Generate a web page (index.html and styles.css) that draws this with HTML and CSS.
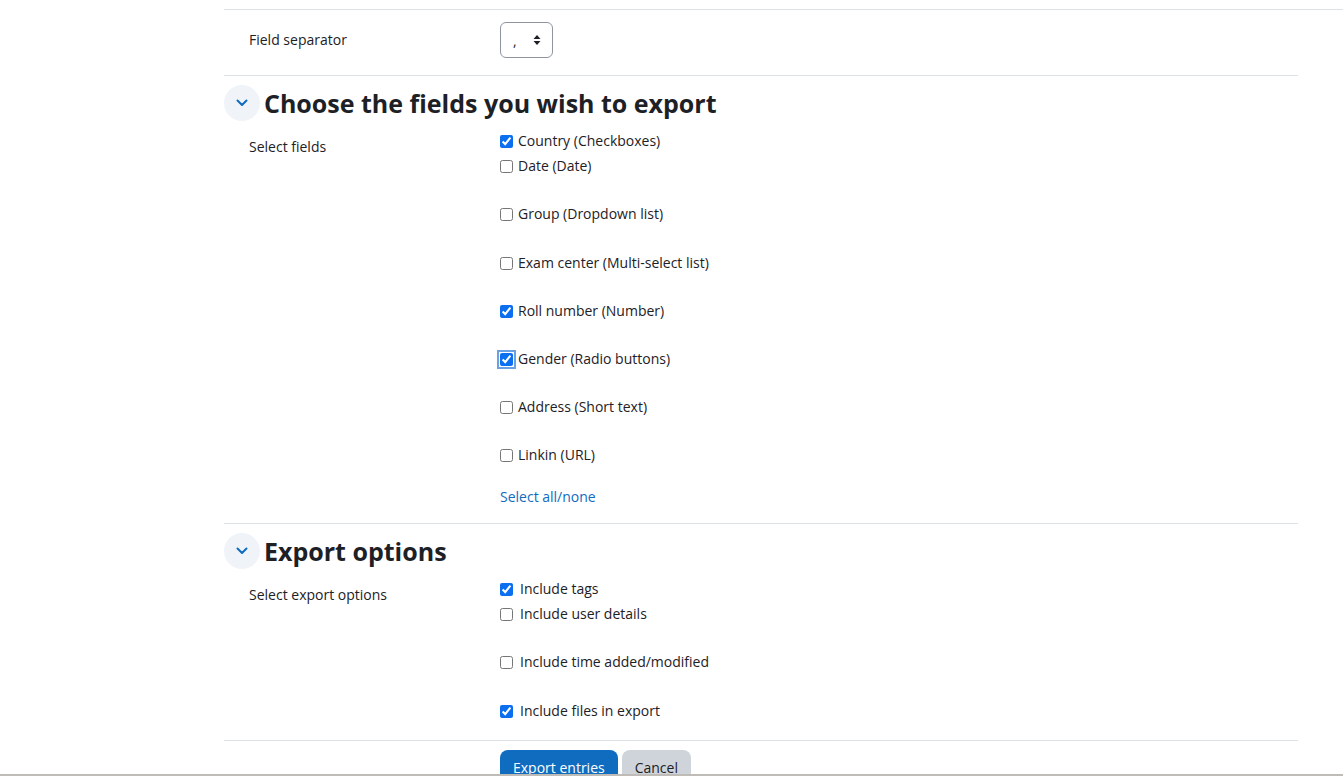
FILE: index.html
```html
<!DOCTYPE html>
<html>
<head>
<meta charset="utf-8">
<link rel="stylesheet" href="styles.css">
</head>
<body>
<div class="page">
  <div class="topline"></div>
  <div class="row sep-row">
    <div class="label">Field separator</div>
    <div class="content">
      <div class="select"><span class="sel-val">,</span>
        <svg class="sel-arrows" width="8" height="12" viewBox="0 0 8 12"><path d="M4 1 L7.5 5 H0.5 Z M4 11 L7.5 7 H0.5 Z" fill="#1d2125"/></svg>
      </div>
    </div>
  </div>

  <div class="section">
    <div class="sec-head">
      <span class="chev"><svg width="14" height="10" viewBox="0 0 14 10"><path d="M2.5 2.5 L7 7 L11.5 2.5" stroke="#0f6cbf" stroke-width="2" fill="none" stroke-linecap="round" stroke-linejoin="round"/></svg></span>
      <h3>Choose the fields you wish to export</h3>
    </div>
    <div class="row fields">
      <div class="label">Select fields</div>
      <div class="content">
        <label class="cb first"><input type="checkbox" checked> Country (Checkboxes)</label>
        <label class="cb"><input type="checkbox"> Date (Date)</label>
        <label class="cb gap"><input type="checkbox"> Group (Dropdown list)</label>
        <label class="cb gap plus"><input type="checkbox"> Exam center (Multi-select list)</label>
        <label class="cb gap"><input type="checkbox" checked> Roll number (Number)</label>
        <label class="cb gap"><input type="checkbox" class="focus" checked> Gender (Radio buttons)</label>
        <label class="cb gap"><input type="checkbox"> Address (Short text)</label>
        <label class="cb gap"><input type="checkbox"> Linkin (URL)</label>
        <a class="link" href="#">Select all/none</a>
      </div>
    </div>
  </div>

  <div class="section">
    <div class="sec-head">
      <span class="chev"><svg width="14" height="10" viewBox="0 0 14 10"><path d="M2.5 2.5 L7 7 L11.5 2.5" stroke="#0f6cbf" stroke-width="2" fill="none" stroke-linecap="round" stroke-linejoin="round"/></svg></span>
      <h3>Export options</h3>
    </div>
    <div class="row opts-row">
      <div class="label">Select export options</div>
      <div class="content opts">
        <label class="cb first"><input type="checkbox" checked> Include tags</label>
        <label class="cb"><input type="checkbox"> Include user details</label>
        <label class="cb gap"><input type="checkbox"> Include time added/modified</label>
        <label class="cb gap plus"><input type="checkbox" checked> Include files in export</label>
      </div>
    </div>
  </div>

  <div class="buttons">
    <button class="btn primary">Export entries</button>
    <button class="btn secondary">Cancel</button>
  </div>
</div>
<div class="bottombar"></div>
</body>
</html>
```
FILE: styles.css
```css
html, body {
  margin: 0;
  padding: 0;
  background: #fff;
  overflow: hidden;
}
body {
  font-family: "Open Sans", "Noto Sans", sans-serif;
  font-size: 14px;
  color: #1d2125;
  height: 776px;
}
.page {
  margin-left: 224px;
  width: 1074px;
}
.topline {
  height: 9px;
  border-bottom: 1px solid #dee2e6;
  margin-right: -45px;
}
.row {
  display: grid;
  grid-template-columns: 276px 1fr;
}
.label {
  padding-left: 25px;
  line-height: 22px;
}
.sep-row {
  padding: 12px 0 17px;
  border-bottom: 1px solid #dee2e6;
  align-items: center;
}
.select {
  width: 53px;
  height: 36px;
  box-sizing: border-box;
  border: 1px solid #8f959e;
  border-radius: 6px;
  display: flex;
  align-items: center;
  justify-content: space-between;
  padding: 0 11px 0 12px;
}
.sel-val {
  font-size: 14px;
  color: #1d2125;
}
.section {
  border-bottom: 1px solid #dee2e6;
}
.sec-head {
  display: flex;
  align-items: center;
  gap: 4px;
  padding-top: 9px;
  height: 36px;
}
.chev {
  width: 36px;
  height: 36px;
  border-radius: 50%;
  background: #f0f4f9;
  display: flex;
  align-items: center;
  justify-content: center;
}
h3 {
  margin: 0;
  font-size: 25px;
  font-weight: 700;
  line-height: 36px;
}
.section .row {
  padding-top: 9px;
  padding-bottom: 15px;
}
.section .row.opts-row {
  padding-bottom: 18px;
}
.section .row .label {
  padding-top: 6px;
}
.cb {
  display: flex;
  align-items: center;
  height: 22px;
  line-height: 22px;
}
.cb input {
  margin: 0 5px 0 0;
  width: 13px;
  height: 13px;
  accent-color: #0b6ff0;
}
.opts .cb input {
  margin-right: 7px;
}
.cb + .cb {
  margin-top: 3px;
}
.cb.gap {
  margin-top: 26px;
}
.cb.gap.plus {
  margin-top: 27px;
}
.fields .cb.gap.plus ~ .cb.gap {
  margin-top: 26px;
}
.focus {
  outline: 2px solid #6aa1e4;
  outline-offset: 1px;
}
.link {
  display: block;
  margin-top: 20px;
  color: #0f6cbf;
  text-decoration: none;
  line-height: 22px;
}
.buttons {
  padding-left: 276px;
  padding-top: 9px;
  display: flex;
  gap: 4px;
}
.btn {
  font-family: inherit;
  font-size: 14px;
  border: none;
  border-radius: 8px;
  height: 36px;
  padding: 0 13px;
  line-height: 36px;
}
.primary {
  background: #0f6cbf;
  color: #fff;
}
.secondary {
  background: #ced4da;
  color: #1d2125;
}
.bottombar {
  position: fixed;
  left: 0;
  right: 0;
  bottom: 0;
  height: 2px;
  background: #bfbcb8;
}
```
